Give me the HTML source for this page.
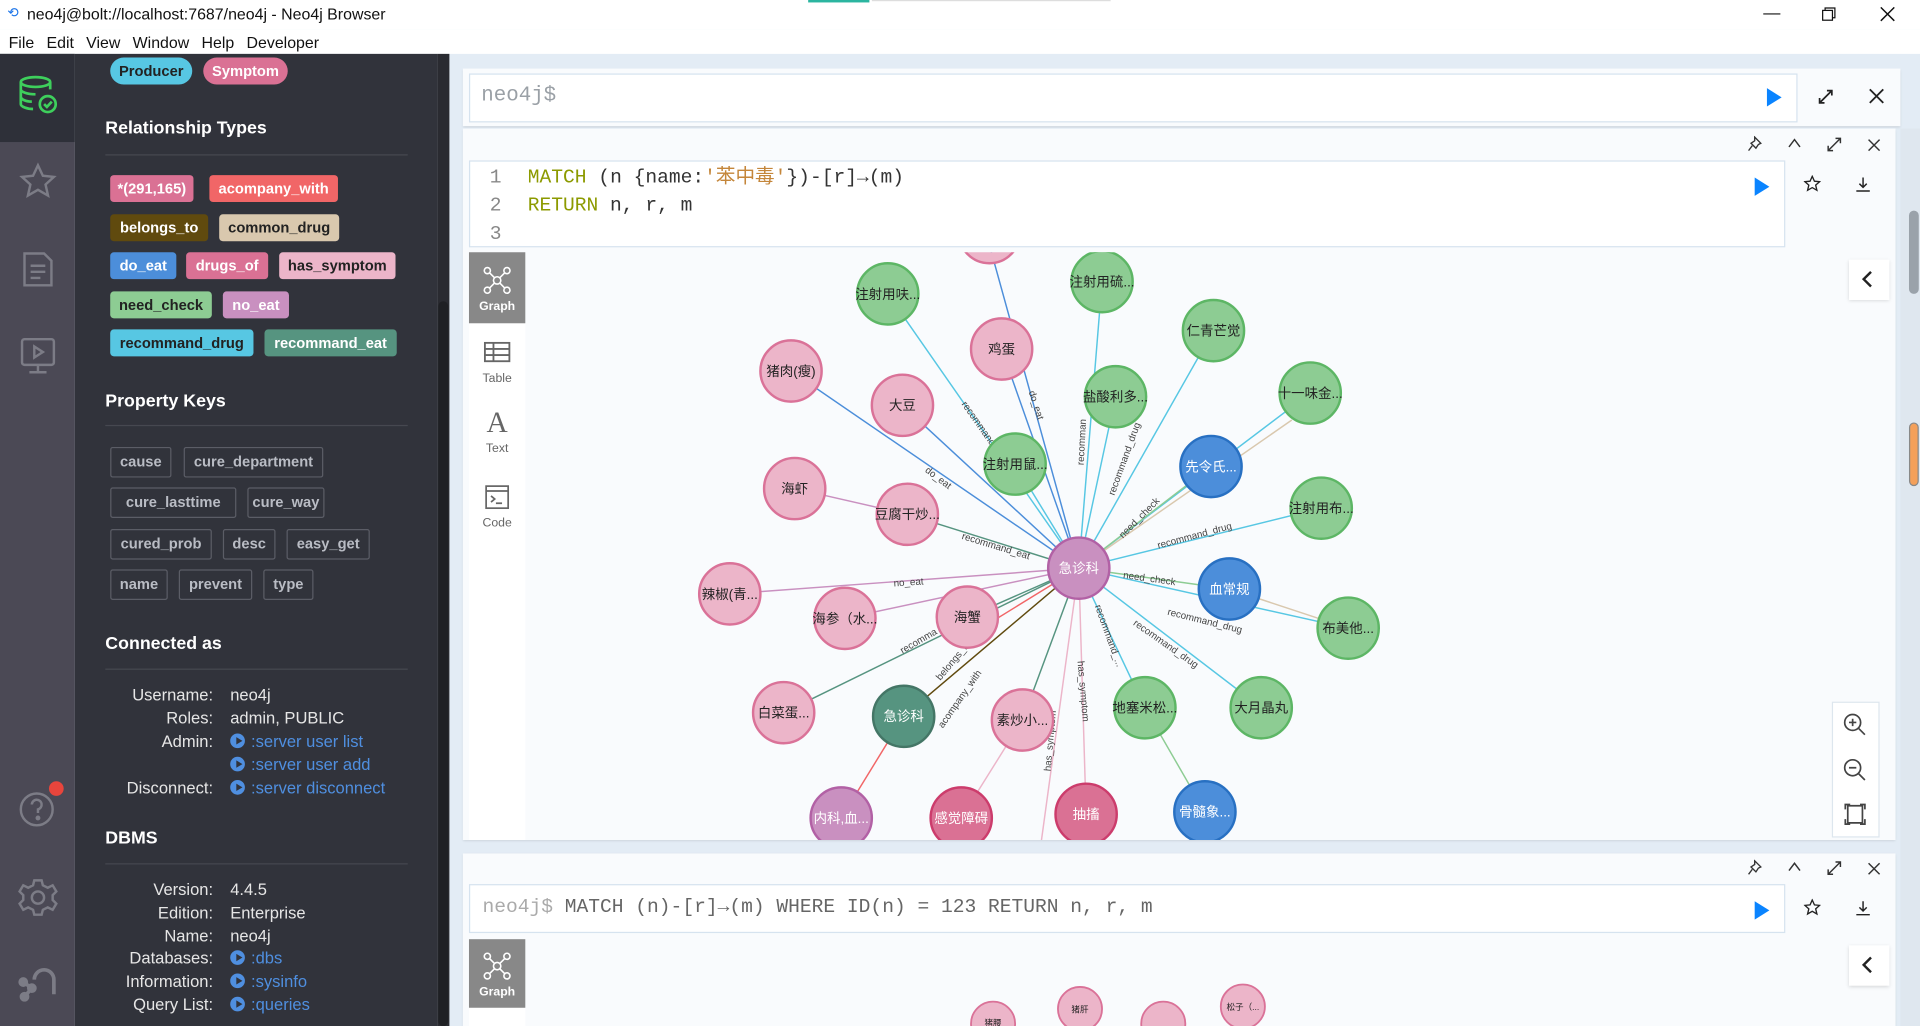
<!DOCTYPE html>
<html><head><meta charset="utf-8">
<style>
*{box-sizing:border-box;margin:0;padding:0}
html,body{width:1920px;height:1026px;overflow:hidden;background:#e3ecf5}
#w{position:absolute;left:0;top:0;width:1568px;height:838px;transform:scale(1.22449);transform-origin:0 0;font-family:"Liberation Sans","Noto Sans CJK SC",sans-serif;overflow:hidden}
.a{position:absolute}
.title{left:0;top:0;width:1568px;height:24px;background:#fff;font-size:13px;color:#111}
.menu{left:0;top:24px;width:1568px;height:20px;background:#fff;font-size:13px;color:#111}
.menu span{margin-right:10px}
.side{left:0;top:44px;width:61px;height:794px;background:#4b4955}
.drawer{left:61px;top:44px;width:296px;height:794px;background:#31333b;color:#fff}
.h{position:absolute;left:25px;font-size:14.5px;font-weight:bold;color:#fff}
.hr{position:absolute;left:25px;width:247px;height:1px;background:#464850}
.chip{position:absolute;height:22px;line-height:22px;font-size:12px;font-weight:bold;text-align:center;border-radius:3px;white-space:nowrap}
.pk{position:absolute;height:25px;line-height:23px;font-size:12px;font-weight:bold;text-align:center;border:1px solid #5b5d66;color:#b9bcc4;border-radius:2px;white-space:nowrap}
.kv{position:absolute;font-size:13.5px;color:#e6e6e6}
.kv .l{position:absolute;right:0;width:100px;text-align:right}
.lk{color:#4f8fe0}
.dot{display:inline-block;width:12px;height:12px;border-radius:50%;background:#4f8fe0;vertical-align:-1px;margin-right:5px;position:relative}
.dot:after{content:"";position:absolute;left:4.5px;top:3px;border-left:5px solid #31333b;border-top:3px solid transparent;border-bottom:3px solid transparent}
.card{background:#f9fbfd;box-shadow:0 1px 2px rgba(0,0,0,.12)}
.mono{font-family:"Liberation Mono","Noto Sans CJK SC",monospace}
.ico{position:absolute;color:#333;font-size:13px}
</style></head><body><div id="w">

<div class="a title"><span class="a" style="left:6px;top:4px;font-size:11px;color:#1a73e8">⟲</span><span class="a" style="left:22px;top:4px">neo4j@bolt://localhost:7687/neo4j - Neo4j Browser</span>
<div class="a" style="left:660px;top:0;width:50px;height:2px;background:#2bb5a0"></div>
<div class="a" style="left:712px;top:0;width:195px;height:1px;background:#ddd"></div>
<span class="a" style="left:1440px;top:2px;font-size:14px">—</span>
<svg class="a" style="left:1487px;top:5px" width="13" height="13"><rect x="1.5" y="3.5" width="8" height="8" fill="none" stroke="#111"/><path d="M3.5 3.5V1.5h8v8h-2" fill="none" stroke="#111"/></svg>
<svg class="a" style="left:1535px;top:5px" width="13" height="13"><path d="M1 1L12 12M12 1L1 12" stroke="#111" stroke-width="1.2"/></svg>
</div>
<div class="a menu"><div class="a" style="left:7px;top:3px"><span>File</span><span>Edit</span><span>View</span><span>Window</span><span>Help</span><span>Developer</span></div></div>

<div class="a side">
<div class="a" style="left:0;top:0;width:61px;height:72px;background:#2e3039"></div>
<svg class="a" style="left:15px;top:17px" width="32" height="32" viewBox="0 0 32 32" fill="none" stroke="#3ecf5c" stroke-width="2.2"><ellipse cx="14" cy="6" rx="12" ry="4"/><path d="M2 6v18c0 2 5 4 10 4M26 6v6M2 12c0 2 5 4 12 4M2 18c0 2 4 4 9 4"/><circle cx="24" cy="24" r="6.5"/><path d="M21 24l2.3 2.3 4-4.3"/></svg>
<svg class="a" style="left:15px;top:88px" width="32" height="32" viewBox="0 0 32 32" fill="none" stroke="#7c7c86" stroke-width="2"><path d="M16 3l4 8.5 9 1-6.8 6.2 2 9L16 23l-8.2 4.7 2-9L3 12.5l9-1z"/></svg>
<svg class="a" style="left:17px;top:160px" width="28" height="32" viewBox="0 0 28 32" fill="none" stroke="#7c7c86" stroke-width="2"><path d="M3 3h16l6 6v20H3z"/><path d="M8 13h12M8 18h12M8 23h8"/></svg>
<svg class="a" style="left:15px;top:230px" width="32" height="34" viewBox="0 0 32 34" fill="none" stroke="#7c7c86" stroke-width="2"><rect x="3" y="3" width="26" height="21" rx="2"/><path d="M13 9v9l7-4.5z"/><path d="M16 24v5M9 30h14"/></svg>
<svg class="a" style="left:15px;top:600px" width="36" height="36" viewBox="0 0 36 36" fill="none" stroke="#7c7c86" stroke-width="2"><circle cx="15" cy="17" r="13"/><path d="M11 13a4 4 0 1 1 5 4v3"/><circle cx="16" cy="24" r="1" fill="#7c7c86"/></svg>
<div class="a" style="left:40px;top:594px;width:12px;height:12px;border-radius:50%;background:#e8453c"></div>
<svg class="a" style="left:14px;top:672px" width="34" height="34" viewBox="0 0 34 34" fill="none" stroke="#7c7c86" stroke-width="2"><circle cx="17" cy="17" r="5"/><path d="M14 3h6l1 4 4 2 4-2 3 5-3 3v4l3 3-3 5-4-2-4 2-1 4h-6l-1-4-4-2-4 2-3-5 3-3v-4l-3-3 3-5 4 2 4-2z"/></svg>
<svg class="a" style="left:14px;top:742px" width="34" height="34" viewBox="0 0 34 34" fill="none" stroke="#7c7c86" stroke-width="3"><path d="M14 14a8 8 0 0 1 16 0v12"/><circle cx="5" cy="16" r="2.5" fill="#7c7c86"/><circle cx="12" cy="21" r="2.5" fill="#7c7c86"/><circle cx="6" cy="28" r="2.5" fill="#7c7c86"/><path d="M5 16l7 5-6 7"/></svg>
</div>

<div class="a drawer">
<div class="chip" style="left:29px;top:3px;width:67px;border-radius:12px;background:#57c7e3;color:#222">Producer</div>
<div class="chip" style="left:105px;top:3px;width:69px;border-radius:12px;background:#da7194;color:#fff">Symptom</div>
<div class="h" style="top:53px">Relationship Types</div><div class="hr" style="top:82px"></div>
<div class="chip" style="left:29px;top:99px;width:68px;background:#da7194;color:#fff">*(291,165)</div>
<div class="chip" style="left:110px;top:99px;width:105px;background:#f16667;color:#fff">acompany_with</div>
<div class="chip" style="left:29px;top:131px;width:80px;background:#604a0e;color:#fff">belongs_to</div>
<div class="chip" style="left:118px;top:131px;width:98px;background:#d9c8ae;color:#222">common_drug</div>
<div class="chip" style="left:29px;top:162px;width:54px;background:#4c8eda;color:#fff">do_eat</div>
<div class="chip" style="left:91px;top:162px;width:67px;background:#da7194;color:#fff">drugs_of</div>
<div class="chip" style="left:167px;top:162px;width:95px;background:#ecb5c9;color:#222">has_symptom</div>
<div class="chip" style="left:29px;top:194px;width:83px;background:#8dcc93;color:#222">need_check</div>
<div class="chip" style="left:121px;top:194px;width:54px;background:#c990c0;color:#fff">no_eat</div>
<div class="chip" style="left:29px;top:225px;width:117px;background:#57c7e3;color:#222">recommand_drug</div>
<div class="chip" style="left:155px;top:225px;width:108px;background:#569480;color:#fff">recommand_eat</div>

<div class="h" style="top:276px">Property Keys</div><div class="hr" style="top:303px"></div>
<div class="pk" style="left:29px;top:321px;width:50px">cause</div>
<div class="pk" style="left:89px;top:321px;width:114px">cure_department</div>
<div class="pk" style="left:29px;top:354px;width:103px">cure_lasttime</div>
<div class="pk" style="left:141px;top:354px;width:63px">cure_way</div>
<div class="pk" style="left:29px;top:388px;width:83px">cured_prob</div>
<div class="pk" style="left:121px;top:388px;width:43px">desc</div>
<div class="pk" style="left:173px;top:388px;width:68px">easy_get</div>
<div class="pk" style="left:29px;top:421px;width:47px">name</div>
<div class="pk" style="left:85px;top:421px;width:60px">prevent</div>
<div class="pk" style="left:154px;top:421px;width:41px">type</div>

<div class="h" style="top:474px">Connected as</div><div class="hr" style="top:502px"></div>
<div class="kv" style="left:13px;top:516px;width:100px"><span class="l">Username:</span></div><div class="kv" style="left:127px;top:516px">neo4j</div>
<div class="kv" style="left:13px;top:535px;width:100px"><span class="l">Roles:</span></div><div class="kv" style="left:127px;top:535px">admin, PUBLIC</div>
<div class="kv" style="left:13px;top:554px;width:100px"><span class="l">Admin:</span></div><div class="kv lk" style="left:127px;top:554px"><span class="dot"></span>:server user list</div>
<div class="kv lk" style="left:127px;top:573px"><span class="dot"></span>:server user add</div>
<div class="kv" style="left:13px;top:592px;width:100px"><span class="l">Disconnect:</span></div><div class="kv lk" style="left:127px;top:592px"><span class="dot"></span>:server disconnect</div>

<div class="h" style="top:633px">DBMS</div><div class="hr" style="top:661px"></div>
<div class="kv" style="left:13px;top:675px;width:100px"><span class="l">Version:</span></div><div class="kv" style="left:127px;top:675px">4.4.5</div>
<div class="kv" style="left:13px;top:694px;width:100px"><span class="l">Edition:</span></div><div class="kv" style="left:127px;top:694px">Enterprise</div>
<div class="kv" style="left:13px;top:713px;width:100px"><span class="l">Name:</span></div><div class="kv" style="left:127px;top:713px">neo4j</div>
<div class="kv" style="left:13px;top:731px;width:100px"><span class="l">Databases:</span></div><div class="kv lk" style="left:127px;top:731px"><span class="dot"></span>:dbs</div>
<div class="kv" style="left:13px;top:750px;width:100px"><span class="l">Information:</span></div><div class="kv lk" style="left:127px;top:750px"><span class="dot"></span>:sysinfo</div>
<div class="kv" style="left:13px;top:769px;width:100px"><span class="l">Query List:</span></div><div class="kv lk" style="left:127px;top:769px"><span class="dot"></span>:queries</div>
</div>
<div class="a" style="left:357px;top:44px;width:10px;height:794px;background:#2a2b31"></div>
<div class="a" style="left:358px;top:246px;width:8px;height:592px;border-radius:4px;background:#1f2024"></div>

<!-- main editor -->
<div class="a card" style="left:378px;top:56px;width:1174px;height:47px"></div>
<div class="a" style="left:383px;top:60px;width:1085px;height:40px;background:#fff;border:1px solid #d6e3ef"></div>
<div class="a mono" style="left:393px;top:69px;font-size:17px;color:#9aa0a6">neo4j$</div>
<svg class="a" style="left:1442px;top:71px" width="14" height="17"><path d="M1 1L13 8.5 1 16z" fill="#0a84ff"/></svg>
<svg class="a" style="left:1484px;top:72px" width="14" height="14" fill="none" stroke="#222" stroke-width="1.4"><path d="M2 12L12 2M8 2h4v4M2 8v4h4"/></svg>
<svg class="a" style="left:1526px;top:72px" width="13" height="13"><path d="M1 1L12 12M12 1L1 12" stroke="#222" stroke-width="1.5"/></svg>

<!-- frame 2 -->
<div class="a card" style="left:378px;top:105px;width:1170px;height:581px"></div>
<svg class="a" style="left:1427px;top:111px" width="12" height="13" fill="none" stroke="#333" stroke-width="1.1"><path d="M6 1l5 5-2 1-2 3-4-4 3-2zM4 8L1 12"/></svg>
<svg class="a" style="left:1460px;top:113px" width="11" height="8" fill="none" stroke="#333" stroke-width="1.2"><path d="M1 7l4.5-6L10 7"/></svg>
<svg class="a" style="left:1492px;top:112px" width="12" height="12" fill="none" stroke="#333" stroke-width="1.2"><path d="M1 11L11 1M7 1h4v4M1 7v4h4"/></svg>
<svg class="a" style="left:1525px;top:113px" width="11" height="11"><path d="M1 1L10 10M10 1L1 10" stroke="#333" stroke-width="1.2"/></svg>
<div class="a" style="left:383px;top:131px;width:1075px;height:71px;background:#fff;border:1px solid #d6e3ef"></div>
<div class="a mono" style="left:400px;top:134px;font-size:16px;line-height:23px;color:#888">1<br>2<br>3</div>
<div class="a mono" style="left:431px;top:134px;font-size:16px;line-height:23px;color:#333;white-space:pre"><span style="color:#8c9a00">MATCH</span> (n {name:<span style="color:#c4863a">'苯中毒'</span>})-[r]→(m)
<span style="color:#8c9a00">RETURN</span> n, r, m</div>
<svg class="a" style="left:1432px;top:144px" width="14" height="17"><path d="M1 1L13 8.5 1 16z" fill="#0a84ff"/></svg>
<svg class="a" style="left:1473px;top:143px" width="14" height="14" fill="none" stroke="#222" stroke-width="1.1"><path d="M7 1l1.8 4 4.2.4-3.2 2.8 1 4.2L7 10.2 3.2 12.4l1-4.2L1 5.4 5.2 5z"/></svg>
<svg class="a" style="left:1515px;top:144px" width="13" height="13" fill="none" stroke="#222" stroke-width="1.2"><path d="M6.5 1v8M3.5 6l3 3 3-3M1 12h11"/></svg>

<div class="a" style="left:383px;top:206px;width:46px;height:480px;background:#fff"></div>
<div class="a" style="left:383px;top:206px;width:46px;height:58px;background:#888"></div>
<svg class="a" style="left:394px;top:217px" width="24" height="24" fill="none" stroke="#fff" stroke-width="1.3"><circle cx="4" cy="4" r="2.5"/><circle cx="20" cy="4" r="2.5"/><circle cx="12" cy="12" r="3"/><circle cx="4" cy="20" r="2.5"/><circle cx="20" cy="20" r="2.5"/><path d="M6 6l4 4M18 6l-4 4M6 18l4-4M18 18l-4-4"/></svg>
<div class="a" style="left:383px;top:245px;width:46px;text-align:center;color:#fff;font-size:10px;font-weight:bold">Graph</div>
<svg class="a" style="left:395px;top:279px" width="22" height="17" fill="none" stroke="#666" stroke-width="1.5"><rect x="1" y="1" width="20" height="15"/><path d="M1 6h20M1 11h20M8 1v15"/></svg>
<div class="a" style="left:383px;top:304px;width:46px;text-align:center;color:#666;font-size:10px">Table</div>
<div class="a" style="left:383px;top:333px;width:46px;text-align:center;color:#666;font-size:24px;font-family:'Liberation Serif',serif">A</div>
<div class="a" style="left:383px;top:361px;width:46px;text-align:center;color:#666;font-size:10px">Text</div>
<svg class="a" style="left:396px;top:396px" width="20" height="20" fill="none" stroke="#666" stroke-width="1.4"><rect x="1" y="1" width="18" height="18"/><path d="M1 5h18M5 9l3 2.5-3 2.5M9 15h5"/></svg>
<div class="a" style="left:383px;top:422px;width:46px;text-align:center;color:#666;font-size:10px">Code</div>

<svg class="a" style="left:429px;top:206px" width="1119" height="480" viewBox="429 206 1119 480" font-family="Liberation Sans,Noto Sans CJK SC,sans-serif">
<g stroke-width="1.2" fill="none">
<line x1="881" y1="464" x2="808" y2="200" stroke="#4c8eda"/>
<line x1="881" y1="464" x2="725" y2="240" stroke="#57c7e3"/>
<line x1="881" y1="464" x2="900" y2="230" stroke="#57c7e3"/>
<line x1="881" y1="464" x2="991" y2="270" stroke="#57c7e3"/>
<line x1="881" y1="464" x2="818" y2="285" stroke="#4c8eda"/>
<line x1="881" y1="464" x2="646" y2="303" stroke="#4c8eda"/>
<line x1="881" y1="464" x2="737" y2="331" stroke="#4c8eda"/>
<line x1="881" y1="464" x2="911" y2="324" stroke="#57c7e3"/>
<line x1="881" y1="464" x2="1070" y2="321" stroke="#57c7e3"/>
<line x1="881" y1="464" x2="829" y2="379" stroke="#57c7e3"/>
<line x1="881" y1="464" x2="989" y2="381" stroke="#8dcc93"/>
<line x1="881" y1="464" x2="1055" y2="343" stroke="#d9c8ae"/>
<line x1="741" y1="420" x2="649" y2="399" stroke="#c990c0"/>
<line x1="881" y1="464" x2="741" y2="420" stroke="#569480"/>
<line x1="881" y1="464" x2="1079" y2="415" stroke="#57c7e3"/>
<line x1="881" y1="464" x2="596" y2="485" stroke="#c990c0"/>
<line x1="881" y1="464" x2="690" y2="505" stroke="#c990c0"/>
<line x1="881" y1="464" x2="790" y2="504" stroke="#569480"/>
<line x1="881" y1="464" x2="1004" y2="481" stroke="#8dcc93"/>
<line x1="1004" y1="481" x2="1101" y2="513" stroke="#d9c8ae"/>
<line x1="881" y1="464" x2="1101" y2="513" stroke="#57c7e3"/>
<line x1="881" y1="464" x2="640" y2="582" stroke="#569480"/>
<line x1="881" y1="464" x2="738" y2="585" stroke="#604a0e"/>
<line x1="881" y1="464" x2="835" y2="588" stroke="#569480"/>
<line x1="881" y1="464" x2="935" y2="578" stroke="#57c7e3"/>
<line x1="881" y1="464" x2="1030" y2="578" stroke="#57c7e3"/>
<line x1="738" y1="585" x2="687" y2="668" stroke="#f16667"/>
<line x1="835" y1="588" x2="785" y2="668" stroke="#ecb5c9"/>
<line x1="881" y1="464" x2="887" y2="665" stroke="#ecb5c9"/>
<line x1="881" y1="464" x2="850" y2="690" stroke="#ecb5c9"/>
<line x1="935" y1="578" x2="984" y2="663" stroke="#8dcc93"/>
<line x1="881" y1="464" x2="790" y2="520" stroke="#f16667"/>
</g>
<g font-size="8" fill="#444">
<text x="755" y="385" transform="rotate(37 755 385)">do_eat</text>
<text x="840" y="320" transform="rotate(72 840 320)">do_eat</text>
<text x="785" y="330" transform="rotate(55 785 330)">recommand</text>
<text x="885" y="380" transform="rotate(-87 885 380)">recomman</text>
<text x="910" y="405" transform="rotate(-70 910 405)">recommand_drug</text>
<text x="917" y="440" transform="rotate(-45 917 440)">need_check</text>
<text x="946" y="448" transform="rotate(-15 946 448)">recommand_drug</text>
<text x="785" y="440" transform="rotate(17 785 440)">recommand_eat</text>
<text x="730" y="479" transform="rotate(-4 730 479)">no_eat</text>
<text x="917" y="472" transform="rotate(8 917 472)">need_check</text>
<text x="953" y="502" transform="rotate(14 953 502)">recommand_drug</text>
<text x="925" y="510" transform="rotate(35 925 510)">recommand_drug</text>
<text x="737" y="534" transform="rotate(-30 737 534)">recomma</text>
<text x="768" y="556" transform="rotate(-50 768 556)">belongs_to</text>
<text x="770" y="595" transform="rotate(-55 770 595)">acompany_with</text>
<text x="880" y="540" transform="rotate(85 880 540)">has_symptom</text>
<text x="858" y="630" transform="rotate(-85 858 630)">has_symptom</text>
<text x="894" y="495" transform="rotate(70 894 495)">recommand_...</text>
</g>
<g stroke-width="2" font-size="11" text-anchor="middle">
<g fill="#ecb5c9" stroke="#da7298"><circle cx="808" cy="190" r="25"/><circle cx="818" cy="285" r="25"/><circle cx="646" cy="303" r="25"/><circle cx="737" cy="331" r="25"/><circle cx="649" cy="399" r="25"/><circle cx="741" cy="420" r="25"/><circle cx="596" cy="485" r="25"/><circle cx="690" cy="505" r="25"/><circle cx="790" cy="504" r="25"/><circle cx="640" cy="582" r="25"/><circle cx="835" cy="588" r="25"/></g>
<g fill="#8dcc93" stroke="#5db665"><circle cx="725" cy="240" r="25"/><circle cx="900" cy="230" r="25"/><circle cx="991" cy="270" r="25"/><circle cx="911" cy="324" r="25"/><circle cx="1070" cy="321" r="25"/><circle cx="829" cy="379" r="25"/><circle cx="1079" cy="415" r="25"/><circle cx="1101" cy="513" r="25"/><circle cx="935" cy="578" r="25"/><circle cx="1030" cy="578" r="25"/></g>
<g fill="#4c8eda" stroke="#2870c2"><circle cx="989" cy="381" r="25"/><circle cx="1004" cy="481" r="25"/><circle cx="984" cy="663" r="25"/></g>
<g fill="#c990c0" stroke="#b261a5"><circle cx="881" cy="464" r="25"/><circle cx="687" cy="668" r="25"/></g>
<circle cx="738" cy="585" r="25" fill="#569480" stroke="#447666"/>
<g fill="#da7194" stroke="#cc3c6c"><circle cx="785" cy="668" r="25"/><circle cx="887" cy="665" r="25"/></g>
<g stroke="none" fill="#222">
<text x="818" y="289">鸡蛋</text><text x="646" y="307">猪肉(瘦)</text><text x="737" y="335">大豆</text><text x="649" y="403">海虾</text><text x="741" y="424">豆腐干炒...</text><text x="596" y="489">辣椒(青...</text><text x="690" y="509">海参（水...</text><text x="790" y="508">海蟹</text><text x="640" y="586">白菜蛋...</text><text x="835" y="592">素炒小...</text>
<text x="725" y="244">注射用呋...</text><text x="900" y="234">注射用硫...</text><text x="991" y="274">仁青芒觉</text><text x="911" y="328">盐酸利多...</text><text x="1070" y="325">十一味金...</text><text x="829" y="383">注射用鼠...</text><text x="1079" y="419">注射用布...</text><text x="1101" y="517">布美他...</text><text x="935" y="582">地塞米松...</text><text x="1030" y="582">大月晶丸</text>
</g>
<g stroke="none" fill="#fff">
<text x="989" y="385">先令氏...</text><text x="1004" y="485">血常规</text><text x="984" y="667">骨髓象...</text><text x="881" y="468">急诊科</text><text x="687" y="672">内科,血...</text><text x="738" y="589">急诊科</text><text x="785" y="672">感觉障碍</text><text x="887" y="669">抽搐</text>
</g>
</g>
</svg>
<div class="a" style="left:1510px;top:212px;width:33px;height:33px;background:#fff;box-shadow:0 1px 3px rgba(0,0,0,.15)"></div>
<svg class="a" style="left:1520px;top:221px" width="10" height="14" fill="none" stroke="#222" stroke-width="2"><path d="M8 1L2 7l6 6"/></svg>
<div class="a" style="left:1496px;top:573px;width:39px;height:111px;background:#fff;border:1px solid #dde6ee"></div>
<svg class="a" style="left:1505px;top:582px" width="20" height="95" fill="none" stroke="#444" stroke-width="1.4"><circle cx="8" cy="8" r="6.5"/><path d="M13 13l5 5M5 8h6M8 5v6"/><circle cx="8" cy="45" r="6.5"/><path d="M13 50l5 5M5 45h6"/><path d="M4 76h12v14H4zM2 79v-4h4M14 75h4v4M18 87v4h-4M6 91H2v-4"/></svg>

<!-- scrollbar right -->
<div class="a" style="left:1552px;top:105px;width:16px;height:733px;background:#dfe7ef"></div>
<div class="a" style="left:1559px;top:172px;width:8px;height:68px;border-radius:4px;background:#9aa2aa"></div>
<div class="a" style="left:1559px;top:345px;width:8px;height:52px;border-radius:4px;border:1px solid #888;background:#f4a05a"></div>

<!-- frame 3 -->
<div class="a card" style="left:378px;top:697px;width:1170px;height:141px"></div>
<svg class="a" style="left:1427px;top:702px" width="12" height="13" fill="none" stroke="#333" stroke-width="1.1"><path d="M6 1l5 5-2 1-2 3-4-4 3-2zM4 8L1 12"/></svg>
<svg class="a" style="left:1460px;top:704px" width="11" height="8" fill="none" stroke="#333" stroke-width="1.2"><path d="M1 7l4.5-6L10 7"/></svg>
<svg class="a" style="left:1492px;top:703px" width="12" height="12" fill="none" stroke="#333" stroke-width="1.2"><path d="M1 11L11 1M7 1h4v4M1 7v4h4"/></svg>
<svg class="a" style="left:1525px;top:704px" width="11" height="11"><path d="M1 1L10 10M10 1L1 10" stroke="#333" stroke-width="1.2"/></svg>
<div class="a" style="left:383px;top:722px;width:1075px;height:40px;background:#fff;border:1px solid #d6e3ef"></div>
<div class="a mono" style="left:394px;top:732px;font-size:16px;color:#666;white-space:pre"><span style="color:#aaa">neo4j$</span> MATCH (n)-[r]→(m) WHERE ID(n) = 123 RETURN n, r, m</div>
<svg class="a" style="left:1432px;top:735px" width="14" height="17"><path d="M1 1L13 8.5 1 16z" fill="#0a84ff"/></svg>
<svg class="a" style="left:1473px;top:734px" width="14" height="14" fill="none" stroke="#222" stroke-width="1.1"><path d="M7 1l1.8 4 4.2.4-3.2 2.8 1 4.2L7 10.2 3.2 12.4l1-4.2L1 5.4 5.2 5z"/></svg>
<svg class="a" style="left:1515px;top:735px" width="13" height="13" fill="none" stroke="#222" stroke-width="1.2"><path d="M6.5 1v8M3.5 6l3 3 3-3M1 12h11"/></svg>
<div class="a" style="left:383px;top:767px;width:46px;height:71px;background:#fff"></div>
<div class="a" style="left:383px;top:767px;width:46px;height:56px;background:#888"></div>
<svg class="a" style="left:394px;top:777px" width="24" height="24" fill="none" stroke="#fff" stroke-width="1.3"><circle cx="4" cy="4" r="2.5"/><circle cx="20" cy="4" r="2.5"/><circle cx="12" cy="12" r="3"/><circle cx="4" cy="20" r="2.5"/><circle cx="20" cy="20" r="2.5"/><path d="M6 6l4 4M18 6l-4 4M6 18l4-4M18 18l-4-4"/></svg>
<div class="a" style="left:383px;top:805px;width:46px;text-align:center;color:#fff;font-size:10px;font-weight:bold">Graph</div>
<div class="a" style="left:1510px;top:772px;width:33px;height:33px;background:#fff;box-shadow:0 1px 3px rgba(0,0,0,.15)"></div>
<svg class="a" style="left:1520px;top:781px" width="10" height="14" fill="none" stroke="#222" stroke-width="2"><path d="M8 1L2 7l6 6"/></svg>
<svg class="a" style="left:429px;top:767px" width="1080" height="71" viewBox="429 767 1080 71" font-family="Liberation Sans,Noto Sans CJK SC,sans-serif" font-size="7" text-anchor="middle">
<g fill="#ecb5c9" stroke="#da7298" stroke-width="1.5"><circle cx="811" cy="836" r="18"/><circle cx="882" cy="824" r="18"/><circle cx="950" cy="836" r="18"/><circle cx="1015" cy="822" r="18"/></g>
<g fill="#222"><text x="811" y="838">猪腰</text><text x="882" y="827">猪肝</text><text x="1015" y="825">松子（...</text></g>
</svg>
</div></body></html>
